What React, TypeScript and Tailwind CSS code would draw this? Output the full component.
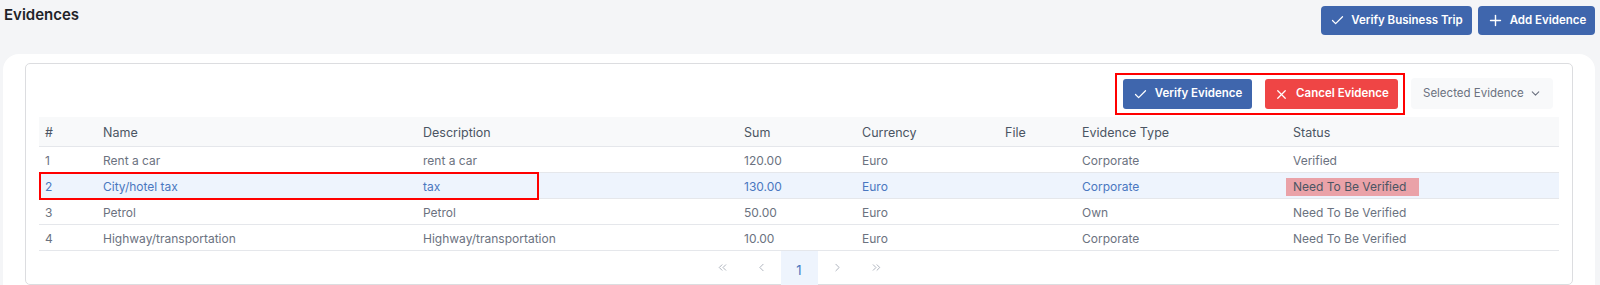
import { Check, Plus, X, ChevronDown, ChevronLeft, ChevronRight, ChevronsLeft, ChevronsRight } from "lucide-react";

const rows = [
  { n: 1, name: "Rent a car", desc: "rent a car", sum: "120.00", cur: "Euro", type: "Corporate", status: "Verified" },
  { n: 2, name: "City/hotel tax", desc: "tax", sum: "130.00", cur: "Euro", type: "Corporate", status: "Need To Be Verified" },
  { n: 3, name: "Petrol", desc: "Petrol", sum: "50.00", cur: "Euro", type: "Own", status: "Need To Be Verified" },
  { n: 4, name: "Highway/transportation", desc: "Highway/transportation", sum: "10.00", cur: "Euro", type: "Corporate", status: "Need To Be Verified" },
];

export default function App() {
  return (
    <div className="w-[1600px] h-[285px] overflow-hidden bg-[#f4f5f7] font-['Inter',sans-serif]">
      {/* page header */}
      <div className="flex justify-between items-start h-[54px] pl-[4px] pr-[5px]">
        <h1 className="text-[15px] font-semibold text-[#1f2328] mt-[4px]">Evidences</h1>
        <div className="flex gap-[6px] mt-[6px]">
          <button className="flex items-center justify-center gap-[6px] h-[29px] w-[151px] bg-[#3f66ad] text-white text-[11.5px] font-semibold rounded-[4px]">
            <Check size={15} strokeWidth={2} />
            Verify Business Trip
          </button>
          <button className="flex items-center justify-center gap-[6px] h-[29px] w-[117px] bg-[#3f66ad] text-white text-[11.5px] font-semibold rounded-[4px]">
            <Plus size={17} strokeWidth={2} />
            Add Evidence
          </button>
        </div>
      </div>

      <div className="ml-[3px] mr-[5px] bg-white rounded-t-[16px] pt-[9px] px-[22px] h-[231px]">
        <div className="border border-[#dcdde0] rounded-[5px] h-full px-[13px]">
          {/* toolbar */}
          <div className="flex justify-end items-center pt-[6px] h-[53px] pr-[6px]">
            <div className="flex items-center gap-[13px] border-2 border-[#ff0000] h-[42px] pl-[6px] pr-[5px] mt-[1px]">
              <button className="flex items-center gap-[7px] h-[30px] w-[129px] justify-center bg-[#3f66ad] text-white text-[11.5px] font-semibold rounded-[3px]">
                <Check size={15} strokeWidth={2} />
                Verify Evidence
              </button>
              <button className="flex items-center gap-[7px] h-[30px] w-[133px] justify-center bg-[#ef4545] text-white text-[11.5px] font-semibold rounded-[3px]">
                <X size={15} strokeWidth={2} />
                Cancel Evidence
              </button>
            </div>
            <div className="ml-[6px] flex items-center justify-between w-[142px] h-[31px] pl-[12px] pr-[11px] bg-[#f8f9fa] rounded-[4px] text-[11.5px] text-[#6b7280]">
              Selected Evidence
              <ChevronDown size={13} strokeWidth={2} />
            </div>
          </div>

          {/* table */}
          <div className="relative">
            <table className="w-[1520px] table-fixed border-collapse">
              <colgroup>
                <col className="w-[58px]" />
                <col className="w-[320px]" />
                <col className="w-[321px]" />
                <col className="w-[118px]" />
                <col className="w-[143px]" />
                <col className="w-[77px]" />
                <col className="w-[211px]" />
                <col />
              </colgroup>
              <thead>
                <tr className="bg-[#f8f9fa] h-[29px] text-[12.5px] text-[#4b5563] border-b border-[#e5e7eb]">
                  <th className="text-left font-normal px-[6px] pt-[4px]">#</th>
                  <th className="text-left font-normal px-[6px] pt-[4px]">Name</th>
                  <th className="text-left font-normal px-[6px] pt-[4px]">Description</th>
                  <th className="text-left font-normal px-[6px] pt-[4px]">Sum</th>
                  <th className="text-left font-normal px-[6px] pt-[4px]">Currency</th>
                  <th className="text-left font-normal px-[6px] pt-[4px]">File</th>
                  <th className="text-left font-normal px-[6px] pt-[4px]">Evidence Type</th>
                  <th className="text-left font-normal px-[6px] pt-[4px]">Status</th>
                </tr>
              </thead>
              <tbody className="text-[12px]">
                {rows.map((r) => {
                  const sel = r.n === 2;
                  return (
                    <tr
                      key={r.n}
                      className={
                        "h-[26px] border-b border-[#e5e7eb] " +
                        (sel ? "bg-[#eef4fd] text-[#4a77c0]" : "text-[#6b7280]")
                      }
                    >
                      <td className="px-[6px] pt-[3px]">{r.n}</td>
                      <td className="px-[6px] pt-[3px]">{r.name}</td>
                      <td className="px-[6px] pt-[3px]">{r.desc}</td>
                      <td className="px-[6px] pt-[3px]">{r.sum}</td>
                      <td className="px-[6px] pt-[3px]">{r.cur}</td>
                      <td className="px-[6px] pt-[3px]"></td>
                      <td className="px-[6px] pt-[3px]">{r.type}</td>
                      <td className="px-[6px] pt-[3px]">
                        {sel ? (
                          <span className="inline-block -ml-[7px] pl-[7px] w-[133px] leading-[18px] bg-[#eaa2a8] text-[#4b5563]">
                            {r.status}
                          </span>
                        ) : (
                          r.status
                        )}
                      </td>
                    </tr>
                  );
                })}
              </tbody>
            </table>
            {/* annotation around row 2 */}
            <div className="absolute left-0 top-[55px] w-[500px] h-[28px] border-2 border-[#ff0000] pointer-events-none" />

            {/* pagination */}
            <div className="flex justify-center items-start h-[40px] text-[#9ca3af]">
              <span className="w-[39px] h-[34px] flex items-center justify-center"><ChevronsLeft size={13} strokeWidth={1.5} /></span>
              <span className="w-[39px] h-[34px] flex items-center justify-center"><ChevronLeft size={13} strokeWidth={1.5} /></span>
              <span className="w-[37px] h-[40px] flex items-center justify-center bg-[#eef4fd] text-[#4a77c0] text-[13px]">1</span>
              <span className="w-[39px] h-[34px] flex items-center justify-center"><ChevronRight size={13} strokeWidth={1.5} /></span>
              <span className="w-[39px] h-[34px] flex items-center justify-center"><ChevronsRight size={13} strokeWidth={1.5} /></span>
            </div>
          </div>
        </div>
      </div>
    </div>
  );
}
